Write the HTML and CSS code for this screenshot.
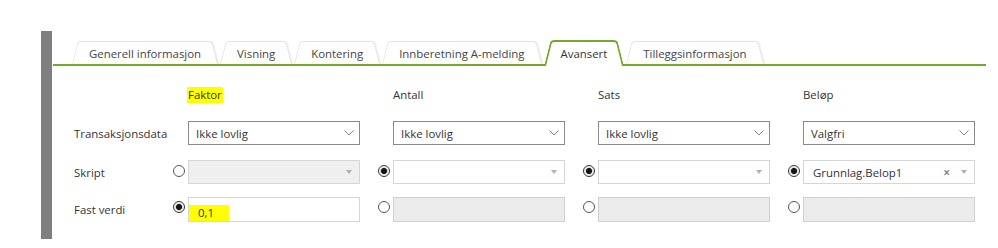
FILE: index.html
```html
<!DOCTYPE html>
<html lang="no">
<head>
<meta charset="utf-8">
<title>Avansert</title>
<link rel="stylesheet" href="styles.css">
</head>
<body>
<div class="page">
  <div class="bar"></div>
  <div class="panel">
    <div class="tabs">
      <div class="tab">Generell informasjon</div>
      <div class="tab">Visning</div>
      <div class="tab">Kontering</div>
      <div class="tab">Innberetning A-melding</div>
      <div class="tab active">Avansert</div>
      <div class="tab">Tilleggsinformasjon</div>
    </div>
    <div class="form">
      <div class="row head">
        <div></div>
        <div class="cell pad"><span class="hl">Faktor</span></div>
        <div class="cell pad">Antall</div>
        <div class="cell pad">Sats</div>
        <div class="cell pad">Beløp</div>
      </div>
      <div class="row r1">
        <div class="label">Transaksjonsdata</div>
        <div class="cell pad"><div class="select"><span>Ikke lovlig</span><svg class="chev" width="10" height="6" viewBox="0 0 10 6"><polyline points="0.5,0.5 5,5 9.5,0.5"/></svg></div></div>
        <div class="cell pad"><div class="select"><span>Ikke lovlig</span><svg class="chev" width="10" height="6" viewBox="0 0 10 6"><polyline points="0.5,0.5 5,5 9.5,0.5"/></svg></div></div>
        <div class="cell pad"><div class="select"><span>Ikke lovlig</span><svg class="chev" width="10" height="6" viewBox="0 0 10 6"><polyline points="0.5,0.5 5,5 9.5,0.5"/></svg></div></div>
        <div class="cell pad"><div class="select"><span>Valgfri</span><svg class="chev" width="10" height="6" viewBox="0 0 10 6"><polyline points="0.5,0.5 5,5 9.5,0.5"/></svg></div></div>
      </div>
      <div class="row r2">
        <div class="label">Skript</div>
        <div class="cell"><span class="radio"></span><div class="combo disabled"><span></span><span class="tri"></span></div></div>
        <div class="cell"><span class="radio on"></span><div class="combo"><span></span><span class="tri"></span></div></div>
        <div class="cell"><span class="radio on"></span><div class="combo"><span></span><span class="tri"></span></div></div>
        <div class="cell"><span class="radio on"></span><div class="combo"><span class="val">Grunnlag.Belop1</span><span class="clear">×</span><span class="tri"></span></div></div>
      </div>
      <div class="row r3">
        <div class="label">Fast verdi</div>
        <div class="cell"><span class="radio on"></span><div class="input"><span class="mark">0,1</span></div></div>
        <div class="cell"><span class="radio"></span><div class="input disabled"></div></div>
        <div class="cell"><span class="radio"></span><div class="input disabled"></div></div>
        <div class="cell"><span class="radio"></span><div class="input disabled"></div></div>
      </div>
    </div>
  </div>
</div>
</body>
</html>
```

FILE: styles.css
```css
html, body {
  margin: 0;
  padding: 0;
  background: #fff;
}
body {
  font-family: "Open Sans", "Liberation Sans", sans-serif;
  font-size: 11.4px;
  color: #333;
}
.page {
  display: flex;
  align-items: flex-start;
  padding: 31px 0 0 41px;
}
.bar {
  width: 11px;
  height: 208px;
  background: #7f7f7f;
  flex: none;
}
.panel {
  width: 933px;
  margin-left: 1px;
}
.tabs {
  display: flex;
  align-items: flex-end;
  gap: 2px;
  height: 23px;
  padding: 10px 0 0 19px;
  border-bottom: 2px solid #74aa2c;
}
.tab {
  position: relative;
  isolation: isolate;
  box-sizing: border-box;
  height: 23px;
  padding: 3px 17px 0;
  line-height: 20px;
  color: #444;
  white-space: nowrap;
}
.tab::before,
.tab::after {
  content: "";
  position: absolute;
  top: 0;
  bottom: 0;
  z-index: -1;
  background: #fff;
  border: 1px solid #e2e2e2;
  border-bottom: none;
  transform-origin: bottom;
}
.tab::before {
  left: 0;
  right: 50%;
  border-right: none;
  border-radius: 4px 0 0 0;
  transform: skewX(-14deg);
}
.tab::after {
  left: 50%;
  right: 0;
  border-left: none;
  border-radius: 0 4px 0 0;
  transform: skewX(14deg);
  box-shadow: 1px 0 1px rgba(0, 0, 0, 0.08);
}
.tab.active {
  height: 26px;
  margin-bottom: -2px;
  padding-top: 4px;
  color: #333;
}
.tab.active::before,
.tab.active::after {
  border-color: #74aa2c;
  border-width: 2px;
  box-shadow: none;
}
.tab.active::before { border-right: none; border-bottom: none; }
.tab.active::after { border-left: none; border-bottom: none; }

.form {
  padding: 21px 0 0 21px;
}
.row {
  display: grid;
  grid-template-columns: 81px repeat(4, 188px);
  column-gap: 17px;
  align-items: center;
}
.head { line-height: 16px; }
.r1 { margin-top: 18px; }
.r2 { margin-top: 15px; }
.r3 { margin-top: 13px; align-items: start; }
.r3 .label { align-self: center; }
.label {
  white-space: nowrap;
}
.cell {
  display: flex;
  align-items: flex-start;
}
.cell.pad {
  padding-left: 16px;
}
.hl {
  background: #ffff00;
  padding: 0 1px;
  margin-left: -1px;
}
.select {
  box-sizing: border-box;
  width: 172px;
  height: 24px;
  border: 1px solid #8a8a8a;
  background: #fff;
  display: flex;
  align-items: center;
  justify-content: space-between;
  padding: 0 5px 0 7px;
}
.chev polyline {
  fill: none;
  stroke: #777;
  stroke-width: 0.9;
}
.radio {
  box-sizing: border-box;
  width: 12px;
  height: 12px;
  margin: 5px 3px 0 1px;
  border: 1px solid #555;
  border-radius: 50%;
  background: #fff;
  flex: none;
}
.r3 .radio { margin-top: 4px; }
.radio.on {
  border-color: #333;
  background: radial-gradient(circle, #151515 0 2.7px, #d9d9d9 3.3px, #fff 5px);
}
.combo {
  box-sizing: border-box;
  width: 172px;
  height: 24px;
  border: 1px solid #d6d6d6;
  background: #fff;
  display: flex;
  align-items: center;
  padding: 0 7px 0 9px;
}
.combo.disabled {
  background: #efefef;
}
.combo .val,
.combo span:first-child {
  flex: 1;
}
.clear {
  color: #888;
  font-weight: bold;
  font-size: 12px;
  margin-right: 11px;
}
.tri {
  width: 0;
  height: 0;
  border-left: 3px solid transparent;
  border-right: 3px solid transparent;
  border-top: 4px solid #b0b0b0;
}
.input {
  box-sizing: border-box;
  width: 172px;
  height: 25px;
  border: 1px solid #d6d6d6;
  background: #fff;
  display: flex;
  align-items: flex-end;
}
.input.disabled {
  background: #ebebeb;
  border-color: #cfcfcf;
}
.mark {
  box-sizing: border-box;
  width: 40px;
  height: 16px;
  line-height: 16px;
  padding-left: 9px;
  background: #ffff00;
  color: #333;
}
```
